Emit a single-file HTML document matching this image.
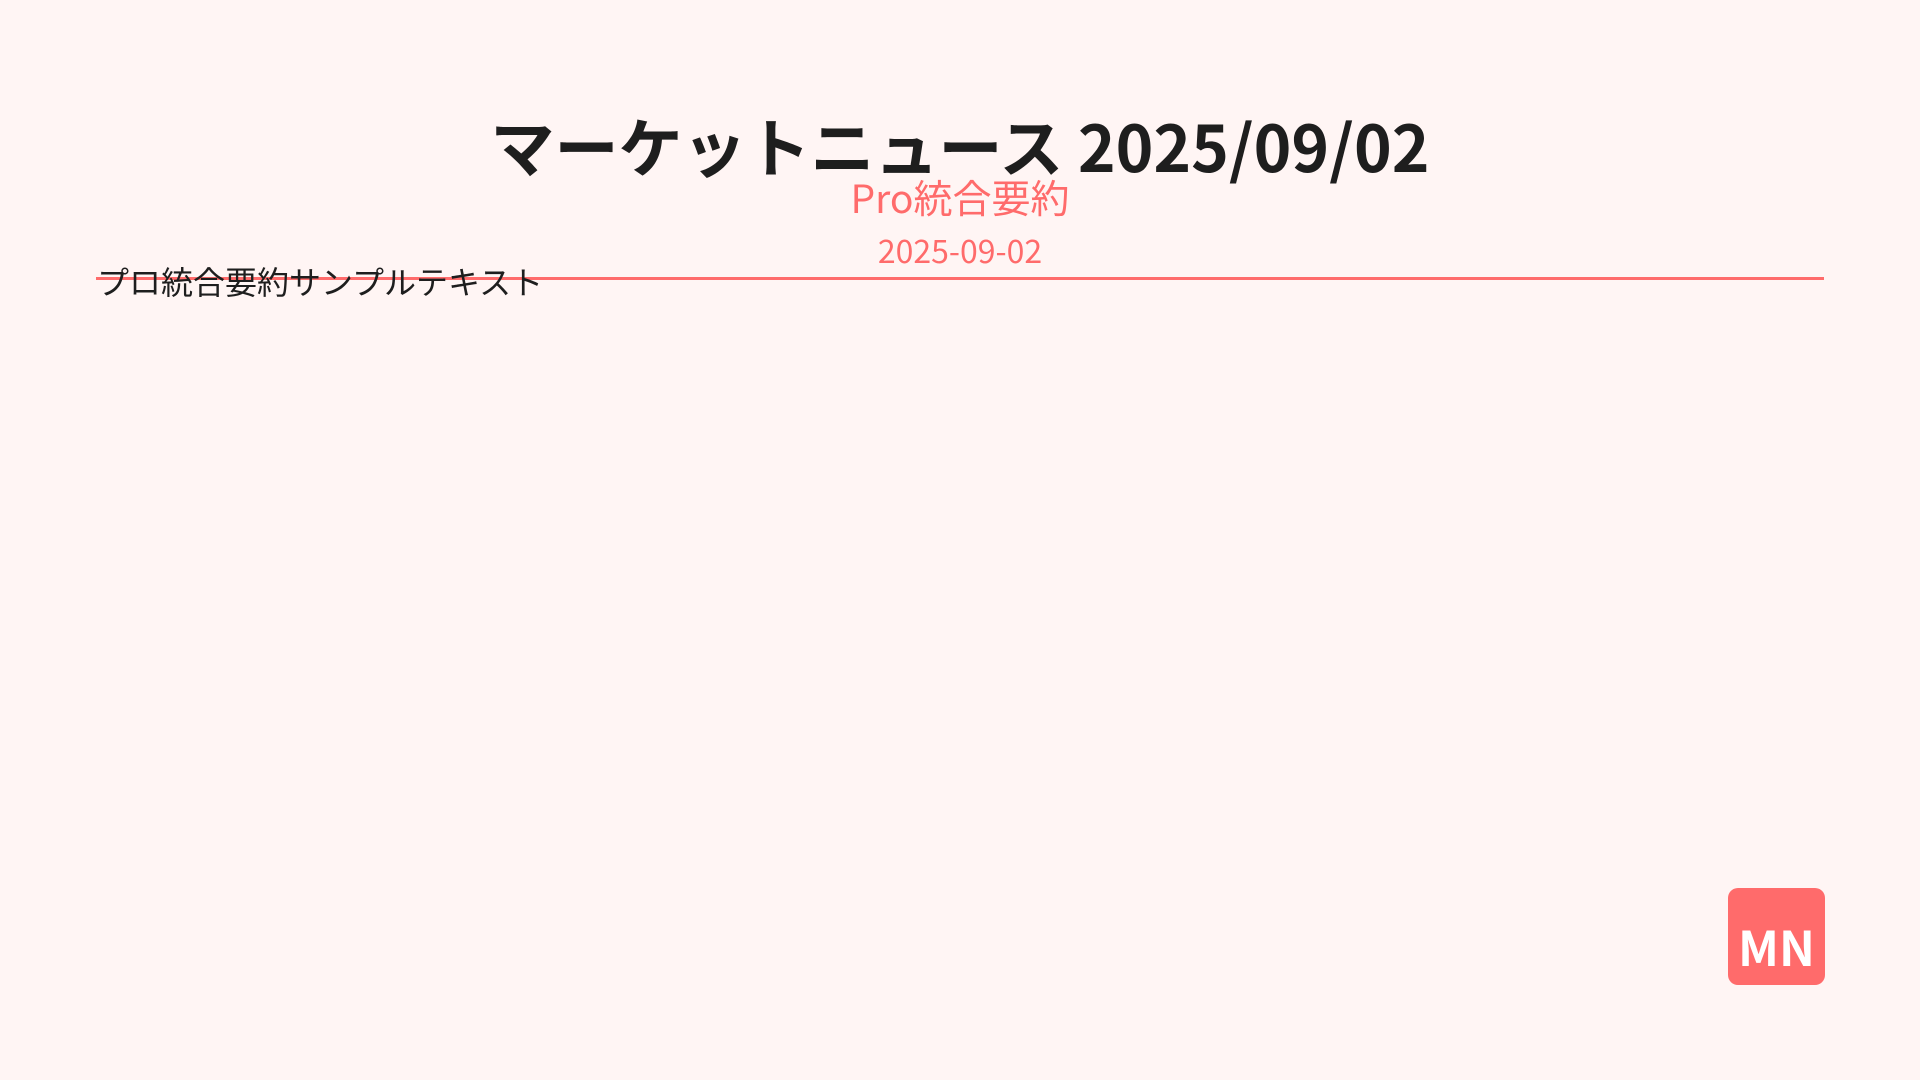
<!DOCTYPE html>
<html><head><meta charset="utf-8"><style>
html,body{margin:0;padding:0}
body{width:1920px;height:1080px;background:#fff5f4;position:relative;overflow:hidden;font-family:"Liberation Sans","Noto Sans CJK JP",sans-serif}
.jp{font-family:"Noto Sans CJK JP","Liberation Sans",sans-serif}
.t{position:absolute;white-space:nowrap;line-height:1}
</style></head><body>
<div class="t jp" style="left:0;width:1920px;text-align:center;top:111px;font-size:64px;font-weight:700;color:#1e1e1e;line-height:68px">マーケットニュース 2025/09/02</div>
<div class="t jp" style="left:0;width:1920px;text-align:center;top:176px;font-size:39px;color:#ff6b6b;line-height:42px">Pro統合要約</div>
<div class="t jp" style="left:0;width:1920px;text-align:center;top:233px;font-size:32px;color:#ff6b6b;line-height:34px">2025-09-02</div>
<div style="position:absolute;left:96px;top:277px;width:1728px;height:3px;background:#ff6b6b"></div>
<div class="t jp" style="left:97px;top:264px;font-size:32px;color:#1e1e1e;line-height:34px">プロ統合要約サンプルテキスト</div>
<div style="position:absolute;left:1728px;top:888px;width:97px;height:97px;background:#ff6b6b;border-radius:10px"></div>
<div class="t jp" style="left:1728px;width:97px;text-align:center;top:918px;font-size:48px;font-weight:700;color:#fff;line-height:54px">MN</div>
</body></html>
